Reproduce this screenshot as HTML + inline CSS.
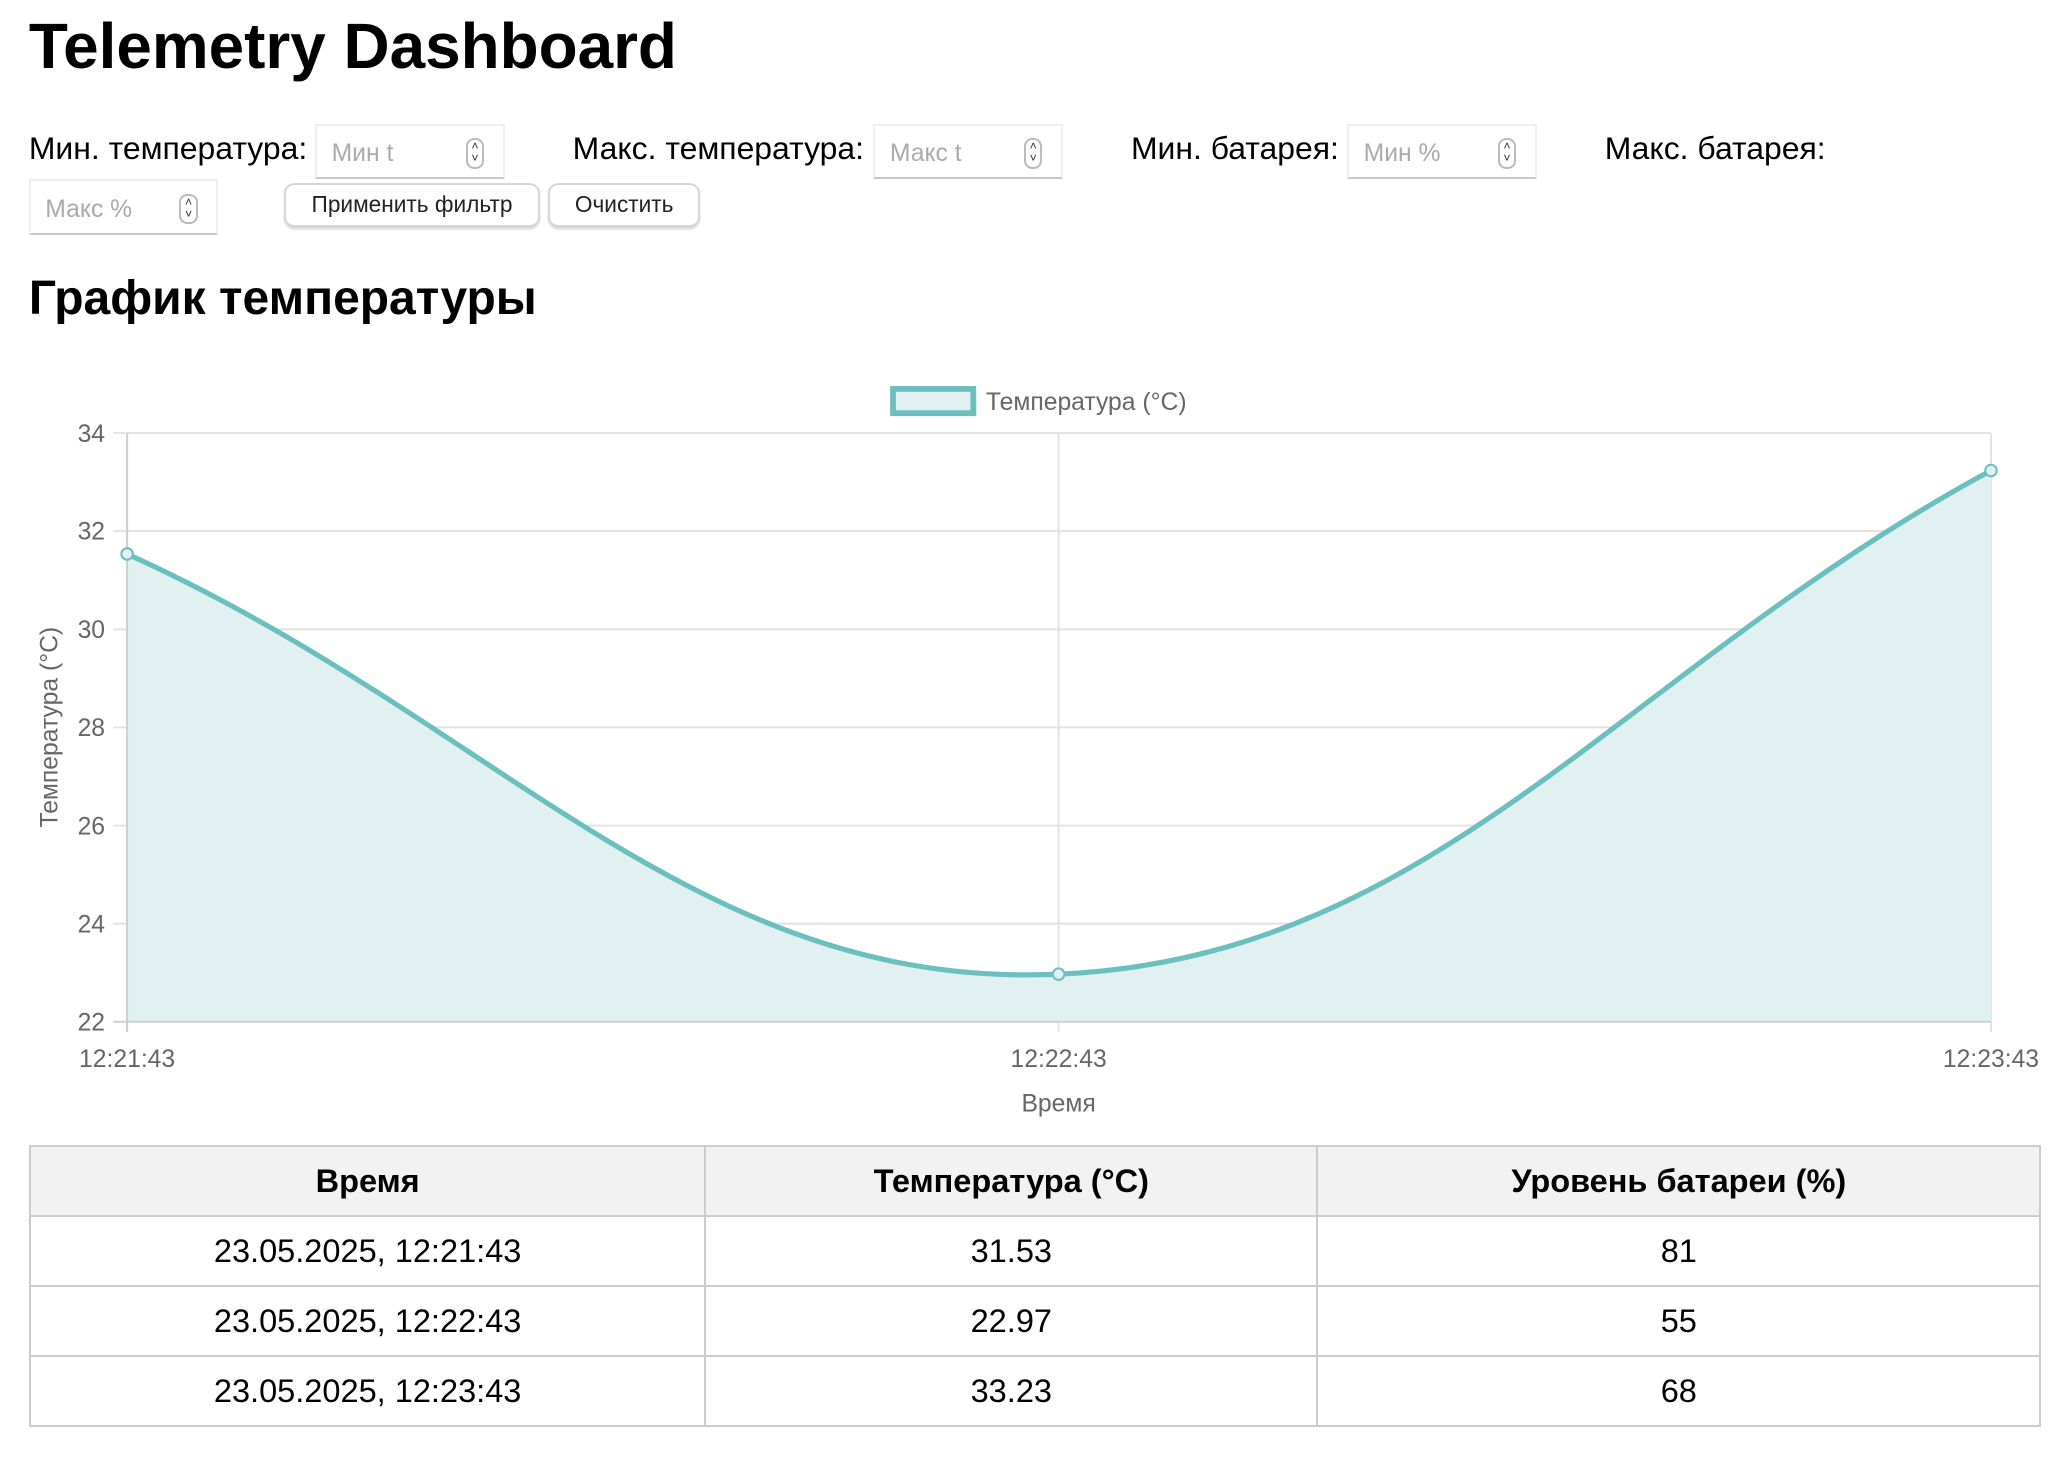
<!DOCTYPE html>
<html><head><meta charset="utf-8">
<style>
html,body{margin:0;padding:0;background:#fff;}
body{width:2062px;height:1460px;overflow:hidden;}
#w{zoom:2.06;width:1001px;height:709px;position:relative;font-family:"Liberation Sans",Arial,sans-serif;color:#000;}
.a{position:absolute;white-space:nowrap;}
h1{position:absolute;margin:0;left:14px;top:4px;font-size:31px;line-height:37px;font-weight:bold;}
h2{position:absolute;margin:0;left:14px;top:131px;font-size:23.3px;line-height:28px;font-weight:bold;}
.lbl{position:absolute;font-size:15.5px;line-height:18px;top:63px;}
.inp{position:absolute;box-sizing:border-box;height:27px;width:92px;border:1px solid #eee;border-bottom:1px solid #c8c8c8;background:#fff;font-size:12px;color:#aaa;}
.inp span{position:absolute;left:7px;top:7px;}
.sp{position:absolute;right:9px;top:6px;width:7px;height:13px;border:1px solid #bbb;border-radius:4px;font-size:6px;line-height:6px;color:#333;text-align:center;}
.btn{position:absolute;box-sizing:border-box;height:21px;top:89px;border:1px solid #d6d6d6;border-radius:5px;background:#fff;box-shadow:0 1px 1px rgba(0,0,0,0.15);font-size:11px;line-height:19px;text-align:center;color:#222;}
table{position:absolute;left:14px;top:556px;border-collapse:collapse;width:977px;font-size:15.8px;}
td,th{border:1px solid #ccc;height:33px;text-align:center;padding:0;}
th{background:#f2f2f2;font-weight:bold;}
</style></head><body><div id="w">
<h1>Telemetry Dashboard</h1>

<div class="lbl" style="left:14px">Мин. температура:</div>
<div class="inp" style="left:153px;top:60px"><span>Мин t</span><div class="sp">˄<br>˅</div></div>
<div class="lbl" style="left:278px">Макс. температура:</div>
<div class="inp" style="left:424px;top:60px"><span>Макс t</span><div class="sp">˄<br>˅</div></div>
<div class="lbl" style="left:549px">Мин. батарея:</div>
<div class="inp" style="left:654px;top:60px"><span>Мин %</span><div class="sp">˄<br>˅</div></div>
<div class="lbl" style="left:779px">Макс. батарея:</div>
<div class="inp" style="left:14px;top:87px"><span>Макс %</span><div class="sp">˄<br>˅</div></div>
<div class="btn" style="left:138px;width:124px">Применить фильтр</div>
<div class="btn" style="left:266px;width:74px">Очистить</div>

<h2>График температуры</h2>

<svg class="a" style="left:0;top:0" width="1001" height="560" viewBox="0 0 1001 560" font-family="Liberation Sans, Arial, sans-serif">
<g stroke="#e3e3e3" stroke-width="1">
<line x1="55" y1="210.2" x2="966.5" y2="210.2"/>
<line x1="55" y1="257.8" x2="966.5" y2="257.8"/>
<line x1="55" y1="305.5" x2="966.5" y2="305.5"/>
<line x1="55" y1="353.1" x2="966.5" y2="353.1"/>
<line x1="55" y1="400.8" x2="966.5" y2="400.8"/>
<line x1="55" y1="448.4" x2="966.5" y2="448.4"/>
<line x1="513.9" y1="210.2" x2="513.9" y2="501"/>
<line x1="966.5" y1="210.2" x2="966.5" y2="501"/>
</g>
<path d="M61.7,268.9 C242.5,350.5 336,480.9 513.9,472.9 C698.1,464.7 785.5,326.2 966.5,228.4 L966.5,496 L61.7,496 Z" fill="#e1f1f1"/>
<line x1="61.7" y1="210.2" x2="61.7" y2="501" stroke="#cfcfcf"/>
<line x1="55" y1="496" x2="966.5" y2="496" stroke="#cfcfcf"/>
<path d="M61.7,268.9 C242.5,350.5 336,480.9 513.9,472.9 C698.1,464.7 785.5,326.2 966.5,228.4" fill="none" stroke="#6cbfbf" stroke-width="2.5"/>
<g fill="#e1f1f1" stroke="#6cbfbf" stroke-width="1">
<circle cx="61.7" cy="268.9" r="2.8"/><circle cx="513.9" cy="472.9" r="2.8"/><circle cx="966.5" cy="228.4" r="2.8"/>
</g>
<rect x="433.5" y="188.8" width="39" height="11.8" fill="#e1f1f1" stroke="#6cbfbf" stroke-width="2.8"/>
<text x="478.6" y="199" font-size="12" fill="#666">Температура (°C)</text>
<g font-size="12" fill="#666" text-anchor="end">
<text x="51" y="214.5">34</text><text x="51" y="262">32</text><text x="51" y="309.8">30</text>
<text x="51" y="357.4">28</text><text x="51" y="405">26</text><text x="51" y="452.7">24</text><text x="51" y="500.3">22</text>
</g>
<g font-size="12" fill="#666" text-anchor="middle">
<text x="61.7" y="518">12:21:43</text><text x="513.9" y="518">12:22:43</text><text x="966.5" y="518">12:23:43</text>
<text x="513.9" y="539.5">Время</text>
<text transform="translate(28,353) rotate(-90)">Температура (°C)</text>
</g>
</svg>

<table>
<tr><th style="width:327px">Время</th><th style="width:296px">Температура (°C)</th><th>Уровень батареи (%)</th></tr>
<tr><td>23.05.2025, 12:21:43</td><td>31.53</td><td>81</td></tr>
<tr><td>23.05.2025, 12:22:43</td><td>22.97</td><td>55</td></tr>
<tr><td>23.05.2025, 12:23:43</td><td>33.23</td><td>68</td></tr>
</table>
</div></body></html>
